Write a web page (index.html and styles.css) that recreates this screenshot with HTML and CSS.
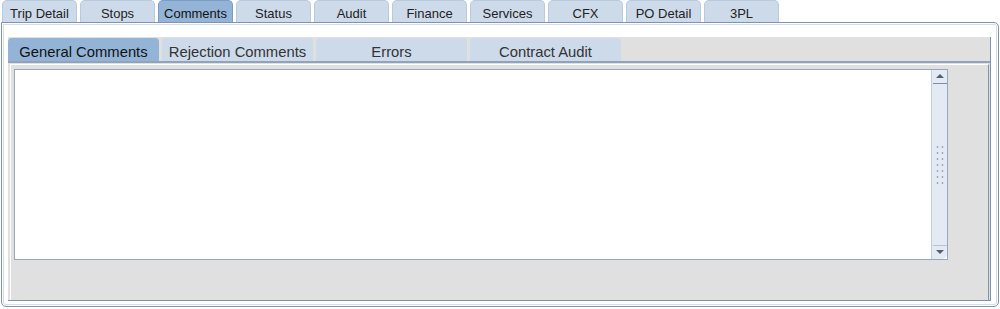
FILE: index.html
```html
<!DOCTYPE html>
<html lang="en">
<head>
  <meta charset="UTF-8" />
  <title>Trip Comments</title>
  <link rel="stylesheet" href="styles.css">
</head>
<body>

  <nav class="tabs">
    <a class="tab">Trip Detail</a>
    <a class="tab">Stops</a>
    <a class="tab active">Comments</a>
    <a class="tab">Status</a>
    <a class="tab">Audit</a>
    <a class="tab">Finance</a>
    <a class="tab">Services</a>
    <a class="tab">CFX</a>
    <a class="tab">PO Detail</a>
    <a class="tab">3PL</a>
  </nav>

  <section class="panel">
    <div class="subpanel">
      <nav class="subtabs">
        <a class="subtab active">General Comments</a>
        <a class="subtab">Rejection Comments</a>
        <a class="subtab">Errors</a>
        <a class="subtab">Contract Audit</a>
      </nav>
      <div class="body">
        <div class="editor">
          <div class="text"></div>
          <div class="scrollbar">
            <span class="arrow up"></span>
            <span class="grip"></span>
            <span class="arrow down"></span>
          </div>
        </div>
      </div>
    </div>
  </section>

</body>
</html>
```

FILE: styles.css
```css
body {
  margin: 0;
  padding: 0;
  font-family: 'Liberation Sans', Arial, sans-serif;
  background: #fff;
  color: #222;
  width: 1000px;
  height: 309px;
  overflow: hidden;
}

.tabs {
  display: flex;
  gap: 3px;
  padding-left: 2px;
  height: 22px;
}

.tab {
  width: 75px;
  box-sizing: border-box;
  padding-top: 5px;
  text-align: center;
  font-size: 13px;
  background: #cddaea;
  border: 1px solid #bac9dc;
  border-bottom: none;
  border-radius: 5px 5px 0 0;
}

.tab.active {
  background: #93b4d6;
  border-color: #7c9dc2;
  color: #111;
}

.panel {
  margin: 0 1px 0 1px;
  height: 285px;
  box-sizing: border-box;
  border: 1px solid #8193ab;
  border-radius: 0 5px 5px 5px;
  padding: 14px 7px 5px 6px;
  box-shadow: inset 0 0 0 1px #fff, inset 0 0 0 2px #d5dde8;
}

.subpanel {
  height: 100%;
  background: #e0e0e0;
  border-right: 1px solid #8193ab;
  border-bottom: 1px solid #8193ab;
  box-sizing: border-box;
  display: flex;
  flex-direction: column;
  padding-top: 1px;
}

.subtabs {
  display: flex;
  gap: 3px;
  height: 25px;
  border-bottom: 2px solid #8fa3bd;
}

.subtab {
  width: 151px;
  box-sizing: border-box;
  padding-top: 6px;
  text-align: center;
  font-size: 14.8px;
  color: #333;
  background: #cddaea;
  border-radius: 4px 4px 0 0;
}

.subtab.active {
  background: #93b4d6;
  color: #111;
}

.body {
  flex: 1;
  margin: 1px 1px 0 2px;
  padding: 4px 40px 40px 3px;
  border-left: 1px solid #fff;
  border-top: 1px solid #fff;
  border-right: 1px solid #8193ab;
}

.editor {
  display: flex;
  height: 191px;
  box-sizing: border-box;
  border: 1px solid #98a8bc;
  background: #fff;
}

.text {
  flex: 1;
}

.scrollbar {
  width: 15px;
  background: #e3eaf4;
  border-left: 1px solid #c3cfdf;
  border-radius: 0 0 5px 0;
  display: flex;
  flex-direction: column;
  justify-content: space-between;
  align-items: center;
}

.arrow {
  display: block;
  width: 14px;
  height: 13px;
  position: relative;
}

.arrow.up {
  border-bottom: 1px solid #7f8ea2;
}

.arrow.down {
  border-top: 1px solid #b6c3d4;
}

.arrow::after {
  content: "";
  position: absolute;
  left: 3px;
  top: 4px;
  border-left: 4px solid transparent;
  border-right: 4px solid transparent;
}

.arrow.up::after {
  border-bottom: 4px solid #545e6e;
}

.arrow.down::after {
  border-top: 4px solid #545e6e;
}

.grip {
  width: 10px;
  height: 42px;
  background-image: radial-gradient(circle, #9aa7b8 0.8px, transparent 1.2px);
  background-size: 5px 6px;
}
```
